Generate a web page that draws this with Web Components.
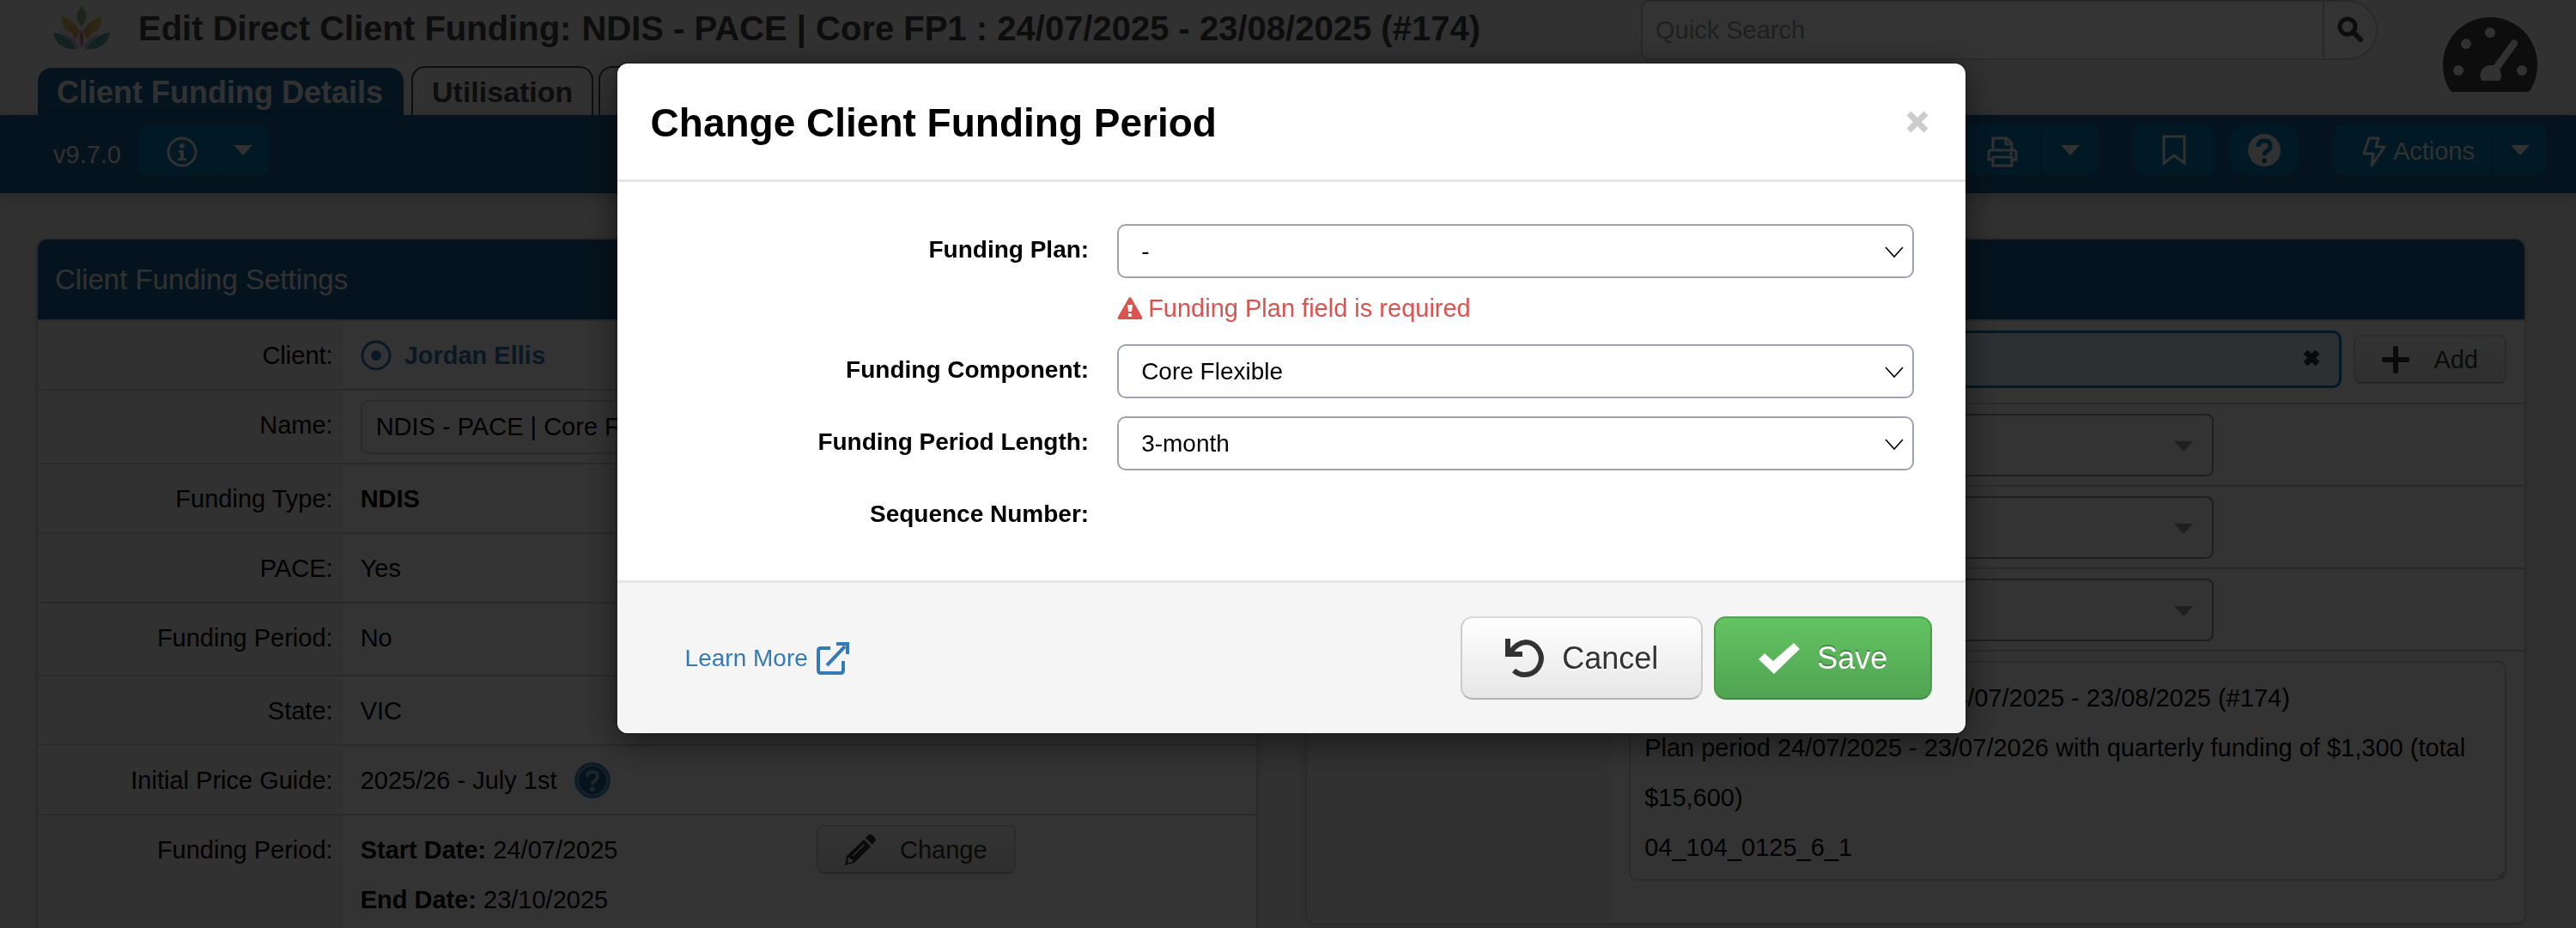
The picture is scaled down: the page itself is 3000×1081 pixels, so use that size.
<!DOCTYPE html>
<html lang="en">
<head>
<meta charset="utf-8">
<title>Edit Direct Client Funding</title>
<style>
  html, body { margin: 0; height: 100%; }
  body {
    font: 29px/58px "Liberation Sans", Arial, sans-serif;
    color: #000; background: #f2f2f2;
    --blue: #1c6094; --cyan: #007db6; --line: #d2d2d2;
  }
</style>
</head>
<body>
<funding-app></funding-app>
<script>
const ICONS = {
  logo: ['0 0 66 52', `<g opacity=".7"><path d="M33 1C26 9 26 17 33 25C40 17 40 9 33 1Z" fill="#5fa53c"/>
    <path d="M10 13C9 25 15 31 22 33L26 22C22 20 17 15 10 13ZM56 13C57 25 51 31 44 33L40 22C44 20 49 15 56 13Z" fill="#cfae2f"/>
    <path d="M23 22C19 30 22 36 27 40L31 30C29 26 27 24 23 22ZM43 22C47 30 44 36 39 40L35 30C37 26 39 24 43 22Z" fill="#e08a33"/>
    <path d="M14 33C17 43 23 49 31 50C28 42 22 36 14 33ZM52 33C49 43 43 49 35 50C38 42 44 36 52 33Z" fill="#b9a3d0"/>
    <path d="M33 28C29 36 30 44 33 50C36 44 37 36 33 28Z" fill="#c9605f"/>
    <path d="M0 32C2 45 13 53 28 51C22 46 19 34 0 32ZM66 32C64 45 53 53 38 51C44 46 47 34 66 32Z" fill="#1f8f84"/></g>`],
  gauge: ['0 0 110 87', `<path fill="currentColor" fill-rule="evenodd" d="M12 87H98Q101 87 103 83Q110 71 110 55A55 55 0 0 0 0 55Q0 71 7 83Q9 87 12 87Z"/>
    <g fill="#f2f2f2"><circle cx="55" cy="18" r="6"/><circle cx="27" cy="31" r="6"/><circle cx="18" cy="62" r="6"/><circle cx="92" cy="62" r="6"/>
    <path d="M45 74A12 12 0 0 1 55 56Q57 56 59 56L79 29A4 4 0 0 1 87 32L66 61A12 12 0 0 1 66 74Z"/></g>`],
  search: ['0 0 30 30', `<circle cx="12" cy="12" r="9" fill="none" stroke="currentColor" stroke-width="5"/><path d="M18 18L27 27" stroke="currentColor" stroke-width="6" stroke-linecap="round"/>`],
  info: ['0 0 36 36', `<circle cx="18" cy="18" r="16" fill="none" stroke="currentColor" stroke-width="3"/><circle cx="18" cy="11" r="3" fill="currentColor"/><path d="M14 16H20V25H23V28H13V25H16V19H14Z" fill="currentColor"/>`],
  caret: ['0 0 22 12', `<path d="M0 0H22L11 12Z" fill="currentColor"/>`],
  print: ['0 0 36 36', `<g fill="none" stroke="currentColor" stroke-width="3"><path d="M7 16V2H23L29 8V16M7 27H2V19Q2 16 5 16H31Q34 16 34 19V27H29"/><path d="M7 24H29V34H7Z"/><path d="M22 2V9H29"/></g><circle cx="28" cy="20" r="2" fill="currentColor"/>`],
  bookmark: ['0 0 30 36', `<path d="M3 2H27V33L15 24L3 33Z" fill="none" stroke="currentColor" stroke-width="3"/>`],
  help: ['0 0 38 38', `<circle cx="19" cy="19" r="19" fill="currentColor"/><path d="M12 15Q12 8 19 8Q26 8 26 14Q26 18 22 20Q19 21 19 25" fill="none" stroke="var(--cyan)" stroke-width="5"/><circle cx="19" cy="31" r="3" fill="var(--cyan)"/>`],
  bolt: ['0 0 28 36', `<path d="M8 2H19L16 12H26L11 34L13 20H2Z" fill="none" stroke="currentColor" stroke-width="3" stroke-linejoin="round"/>`],
  target: ['0 0 36 36', `<circle cx="18" cy="18" r="16" fill="none" stroke="currentColor" stroke-width="3"/><circle cx="18" cy="18" r="6" fill="currentColor"/>`],
  badge: ['0 0 42 42', `<circle cx="21" cy="21" r="21" fill="#3f8dbd"/><circle cx="21" cy="21" r="17" fill="#1d5f96" stroke="#6ba6cb" stroke-width="2"/><path d="M15 17Q15 11 21 11Q27 11 27 16Q27 20 23 22Q21 23 21 26" fill="none" stroke="#8fb6d2" stroke-width="4"/><circle cx="21" cy="31" r="3" fill="#8fb6d2"/>`],
  pencil: ['0 0 36 36', `<path fill="currentColor" fill-rule="evenodd" d="M0 36L2 25L22 6L30 14L11 33ZM4 27L3 32L5 33L9 32L9 29L6 29L6 27ZM9 24L22 11L23 12L10 25Z"/><path d="M24 4L28 0Q30 -1 32 1L35 4Q37 6 35 8L32 12Z" fill="currentColor"/>`],
  plus: ['0 0 32 32', `<path d="M13 2Q13 0 15 0H17Q19 0 19 2V13H30Q32 13 32 15V17Q32 19 30 19H19V30Q19 32 17 32H15Q13 32 13 30V19H2Q0 19 0 17V15Q0 13 2 13H13Z" fill="currentColor"/>`],
  cross: ['0 0 20 20', `<path d="M3 3L17 17M17 3L3 17" stroke="currentColor" stroke-width="7"/>`],
  close: ['0 0 26 26', `<path d="M3 3L23 23M23 3L3 23" stroke="currentColor" stroke-width="7"/>`],
  chevron: ['0 0 22 14', `<path d="M1 1L11 12L21 1" fill="none" stroke="currentColor" stroke-width="1.6"/>`],
  warn: ['0 0 30 26', `<path fill="currentColor" fill-rule="evenodd" d="M15 0Q16 0 17 2L29 23Q30 26 28 26H2Q0 26 1 23L13 2Q14 0 15 0ZM12 9L13 17H17L18 9ZM13 19V23H17V19Z"/>`],
  external: ['0 0 38 38', `<path d="M16 7H5Q2 7 2 10V33Q2 36 5 36H28Q31 36 31 33V22" fill="none" stroke="currentColor" stroke-width="4"/><path d="M12 27L33 5" stroke="currentColor" stroke-width="4"/><path d="M23 0H38V14H34V4H23Z" fill="currentColor"/>`],
  undo: ['0 0 46 46', `<path d="M6 16Q13 5 24 4A19 19 0 1 1 10 37" fill="none" stroke="currentColor" stroke-width="6"/><path d="M0 0H6V15H20V21H0Z" fill="currentColor"/>`],
  check: ['0 0 48 36', `<path d="M0 19L7 12L17 21L41 0L48 7L18 36Z" fill="currentColor"/>`]
};

function define(name, html, setup) {
  const template = document.createElement('template');
  template.innerHTML = html;
  customElements.define(name, class extends HTMLElement {
    constructor() {
      super();
      this.attachShadow({ mode: 'open' }).append(template.content.cloneNode(true));
    }
    connectedCallback() { if (setup) setup(this, this.shadowRoot); }
  });
}

define('app-icon', `<style>:host{display:inline-flex;flex:none}svg{display:block;overflow:visible}</style>`, (el, root) => {
  const [box, art] = ICONS[el.getAttribute('name')];
  const [, , w, h] = box.split(' ');
  root.innerHTML += `<svg viewBox="${box}" width="${w}" height="${h}" aria-hidden="true">${art}</svg>`;
});

/* Split or single button used in the blue tool bar */
define('tool-group', `
<style>
  :host { display: flex; height: 59px; border-radius: 10px; background: var(--cyan); overflow: hidden; }
  :host([round]) { border-radius: 20px; }
  button { font: inherit; color: inherit; background: none; border: 0; padding: 0; margin: 0;
    display: flex; align-items: center; justify-content: center; gap: 8px; }
  .main { flex: 1; padding: 4px var(--end, 20px) 0 33px; }
  .more { width: var(--more, 63px); border-left: 2px solid #006a9e; }
  :host([single]) .main { padding: 0 var(--pad); }
  :host([single]) .more { display: none; }
</style>
<button class="main"><slot></slot></button>
<button class="more" aria-label="More"><app-icon name="caret"></app-icon></button>`);

define('page-header', `
<style>
  :host { display: flex; height: 134px; color: #444; }
  .left { flex: 1; display: flex; flex-direction: column; justify-content: space-between; }
  .title { display: flex; gap: 33px; padding: 6px 0 0 62px; }
  h1 { margin: 0; font-size: 40px; line-height: 54px; font-weight: bold; display: flex; gap: 12px; white-space: nowrap; }
  nav { display: flex; align-items: flex-end; padding-left: 44px; gap: 6px; }
  nav a { box-sizing: border-box; color: #444; text-decoration: none; font-weight: bold; font-size: 34px; line-height: 57px;
    border: 2px solid #444; border-bottom: 0; border-radius: 16px 16px 0 0; padding: 0 22px; height: 57px; min-width: 160px; }
  nav a.active { background: var(--blue); color: #f2f2f2; border: 0; height: 55px; font-size: 36px; padding: 0 24px 0 22px; margin-right: 3px; }
  form { margin: 0 76px 0 0; box-sizing: border-box; width: 858px; height: 70px; display: flex; background: #fff;
    border: 2px solid #ccc; border-radius: 8px 35px 35px 8px; }
  input { font: inherit; line-height: 40px; border: 0; background: none; flex: 1; min-width: 0; padding: 0 15px; }
  input::placeholder { color: #999; opacity: 1; }
  form button { border: 0; border-left: 2px solid #ccc; background: none; color: #444; width: 62px; padding: 0; }
  .gauge { padding: 20px 45px 0 0; color: #444; }
</style>
<div class="left">
  <div class="title"><app-icon name="logo"></app-icon>
    <h1><span>Edit Direct Client Funding:</span><span>NDIS - PACE | Core FP1 : 24/07/2025 - 23/08/2025 (#174)</span></h1></div>
  <nav><a class="active" href="#details">Client Funding Details</a><a href="#utilisation">Utilisation</a><a href="#more"></a></nav>
</div>
<form><input type="text" placeholder="Quick Search" aria-label="Quick Search"><button type="button" aria-label="Search"><app-icon name="search"></app-icon></button></form>
<a class="gauge" href="#dashboard" aria-label="Dashboard"><app-icon name="gauge"></app-icon></a>`);

define('tool-bar', `
<style>
  :host { display: flex; box-sizing: border-box; height: 91px; padding: 11px 35px 0 62px; background: var(--blue); color: #f2f2f2;
    box-shadow: 0 4px 16px rgba(0,0,0,.2); position: relative; line-height: 59px; }
  .version { line-height: 70px; margin-right: 20px; }
  .spacer { flex: 1; }
  .gap { margin-left: 41px; } .near { margin-left: 18px; }
  .print { --more: 68px; --end: 26px; }
  .bookmark { --pad: 32px; } .help { --pad: 21px; }
</style>
<span class="version">v9.7.0</span>
<tool-group><app-icon name="info"></app-icon></tool-group>
<div class="spacer"></div>
<tool-group class="print"><app-icon name="print"></app-icon></tool-group>
<tool-group class="gap bookmark" single><app-icon name="bookmark"></app-icon></tool-group>
<tool-group class="near help" single round><app-icon name="help"></app-icon></tool-group>
<tool-group class="gap"><app-icon name="bolt"></app-icon>Actions</tool-group>`);

define('settings-panel', `
<style>
  :host { display: block; box-sizing: border-box; background: #fff; border: 2px solid var(--line); border-radius: 12px; overflow: hidden;
    box-shadow: 0 2px 8px rgba(0,0,0,.12); }
  h2 { margin: 0; font-size: 33px; font-weight: normal; line-height: 93px; height: 93px; padding-left: 20px; background: var(--blue); color: #f2f2f2;
    border-bottom: 2px solid var(--line); }
</style>
<h2><slot name="title"></slot></h2><slot></slot>`);

define('field-row', `
<style>
  :host { display: grid; grid-template-columns: 25% 1fr; border-bottom: 2px solid var(--line); }
  :host([tall]) { min-height: 83px; }
  :host([last]) { border-bottom: 0; }
  .label { background: #f2f2f2; text-align: right; padding: 11px 11px 10px 0; }
  .value { padding: 11px 21px 10px; min-width: 0; }
</style>
<div class="label"><slot name="label"></slot></div><div class="value"><slot></slot></div>`);

define('soft-button', `
<style>
  :host { display: block; }
  button { font: inherit; line-height: 52px; color: #333; display: flex; align-items: center; gap: 28px; height: 57px; padding: 0 31px; margin: 0;
    background: linear-gradient(#fff, #e9e9e9); border: 2px solid #d5d5d5; border-bottom-color: #b8b8b8; border-radius: 8px; }
</style>
<button><slot></slot></button>`);

define('combo-box', `
<style>
  :host { display: block; width: 66.6%; position: relative; }
  select { appearance: none; display: block; width: 100%; height: 73px; font: inherit; background: #fff; border: 2px solid #999; border-radius: 8px; padding: 0 20px; }
  app-icon { position: absolute; right: 24px; top: 32px; color: #999; }
</style>
<select aria-label="Option"><option></option></select><app-icon name="caret"></app-icon>`);

define('modal-field', `
<style>
  :host { display: grid; grid-template-columns: 550fr 929fr; column-gap: 33px; }
  label { font-weight: bold; text-align: right; line-height: 60px; }
  .control { position: relative; min-height: 60px; }
  select { appearance: none; display: block; width: 100%; height: 63px; font: inherit; line-height: 40px; color: #000; background: #fff;
    border: 2px solid #9ca3b3; border-radius: 10px; padding: 0 26px; margin: 0; }
  .control app-icon { position: absolute; right: 12px; top: 26px; }
</style>
<label for="field"></label><div class="control"><slot></slot></div>`, (el, root) => {
  root.querySelector('label').textContent = el.getAttribute('label');
  const value = el.getAttribute('value');
  if (value) {
    root.querySelector('.control').insertAdjacentHTML('afterbegin',
      `<select id="field"><option>${value}</option></select><app-icon name="chevron"></app-icon>`);
  }
});

define('funding-period-dialog', `
<style>
  :host { position: fixed; inset: 0; z-index: 10; background: rgba(0,0,0,.8); display: flex; justify-content: center; align-items: flex-start;
    padding: 72px 0 0 8px; font-size: 28px; }
  section { width: 52.5%; background: #fff; background-clip: padding-box; border: 2px solid rgba(0,0,0,.2); border-radius: 14px;
    box-shadow: 0 10px 40px rgba(0,0,0,.5); }
  header { display: flex; justify-content: space-between; align-items: center; padding: 43px 43px 40px 39px; border-bottom: 3px solid #e5e5e5; }
  h2 { margin: 0; font-size: 46px; line-height: 52px; }
  .close { background: none; border: 0; padding: 0; color: #ccc; }
  .body { display: flex; flex-direction: column; gap: 21px; padding: 49px 60px 47px 0; }
  .error { display: flex; align-items: center; gap: 6px; padding-top: 14px; color: #d9534f; font-size: 29px; line-height: 42px; }
  footer { display: flex; align-items: center; gap: 13px; padding: 39px 39px 39px 79px; background: #f5f5f5; border-top: 3px solid #e5e5e5; border-radius: 0 0 12px 12px; }
  a { display: flex; align-items: center; gap: 10px; margin-right: auto; color: #337ab7; text-decoration: none; }
  footer button { box-sizing: border-box; display: flex; align-items: center; height: 97px; gap: 20px; font: 36px/44px "Liberation Sans", Arial, sans-serif; padding: 0 50px;
    border-radius: 14px; border: 2px solid #ccc; }
  .cancel { color: #333; background: linear-gradient(#fff, #e6e6e6); border-color: #d9d9d9 #ccc #b3b3b3; text-shadow: 0 2px 2px #fff; }
  footer .save { color: #fff; background: linear-gradient(#62c462, #51a351); border-color: #51a351 #4a9a4a #418a41; text-shadow: 0 -2px 0 rgba(0,0,0,.25); }
</style>
<section role="dialog" aria-modal="true" aria-labelledby="heading">
  <header><h2 id="heading">Change Client Funding Period</h2><button class="close" aria-label="Close"><app-icon name="close"></app-icon></button></header>
  <div class="body">
    <modal-field label="Funding Plan:" value="-"><div class="error"><app-icon name="warn"></app-icon>Funding Plan field is required</div></modal-field>
    <modal-field label="Funding Component:" value="Core Flexible"></modal-field>
    <modal-field label="Funding Period Length:" value="3-month"></modal-field>
    <modal-field label="Sequence Number:"></modal-field>
  </div>
  <footer><a href="#learn">Learn More <app-icon name="external"></app-icon></a>
    <button class="cancel"><app-icon name="undo"></app-icon>Cancel</button>
    <button class="save"><app-icon name="check"></app-icon>Save</button></footer>
</section>`);

define('funding-app', `
<style>
  :host { display: block; height: 100vh; overflow: hidden; }
  main { display: grid; grid-template-columns: 1fr 1fr; gap: 55px; padding: 52px 58px 0 42px; align-items: start; }
  a { color: #337ab7; font-weight: bold; text-decoration: none; }
  .name { box-sizing: border-box; display: block; width: 100%; height: 63px; font: inherit; line-height: 40px; border: 2px solid var(--line); border-radius: 10px; padding: 0 16px; }
  .inline { display: flex; align-items: center; gap: 20px; height: 58px; }
  a.inline { gap: 15px; }
  .period { display: grid; grid-template-columns: 52% auto; justify-items: start; padding-bottom: 60px; }
  .add { display: flex; align-items: center; gap: 14px; padding-bottom: 7px; }
  .tags { box-sizing: border-box; flex: 1; height: 67px; display: flex; align-items: center; justify-content: flex-end; padding-right: 22px;
    background: #dff0fa; border: 3px solid #007db6; border-radius: 10px; }
  .tags button { border: 0; background: none; padding: 0; color: #333; }
  textarea { box-sizing: border-box; display: block; width: 100%; height: 256px; font: inherit; color: #000; background: #fff; border: 2px solid var(--line); border-radius: 10px;
    padding: 12px 16px; margin-bottom: 39px; overflow: hidden; }
</style>
<page-header></page-header>
<tool-bar></tool-bar>
<main>
  <settings-panel><span slot="title">Client Funding Settings</span>
    <field-row><span slot="label">Client:</span><a class="inline" href="#client"><app-icon name="target"></app-icon>Jordan Ellis</a></field-row>
    <field-row><label slot="label" for="name">Name:</label><input class="name" id="name" type="text" value="NDIS - PACE | Core FP1 : 24/07/2025 - 23/08/2025 (#174)"></field-row>
    <field-row><span slot="label">Funding Type:</span><b>NDIS</b></field-row>
    <field-row><span slot="label">PACE:</span>Yes</field-row>
    <field-row tall><span slot="label">Funding Period:</span>No</field-row>
    <field-row><span slot="label">State:</span>VIC</field-row>
    <field-row><span slot="label">Initial Price Guide:</span><div class="inline">2025/26 - July 1st<app-icon name="badge"></app-icon></div></field-row>
    <field-row last><span slot="label">Funding Period:</span>
      <div class="period"><div><b>Start Date:</b> 24/07/2025<br><b>End Date:</b> 23/10/2025</div>
        <soft-button><app-icon name="pencil"></app-icon>Change</soft-button></div></field-row>
  </settings-panel>
  <settings-panel>
    <field-row><div class="add"><div class="tags"><button aria-label="Remove"><app-icon name="cross"></app-icon></button></div>
      <soft-button><app-icon name="plus"></app-icon>Add</soft-button></div></field-row>
    <field-row><combo-box></combo-box></field-row>
    <field-row><combo-box></combo-box></field-row>
    <field-row><combo-box></combo-box></field-row>
    <field-row last><textarea aria-label="Notes">NDIS - PACE | Core FP1 : 24/07/2025 - 23/08/2025 (#174)
Plan period 24/07/2025 - 23/07/2026 with quarterly funding of $1,300 (total $15,600)
04_104_0125_6_1</textarea></field-row>
  </settings-panel>
</main>
<funding-period-dialog></funding-period-dialog>`);
</script>
</body>
</html>
